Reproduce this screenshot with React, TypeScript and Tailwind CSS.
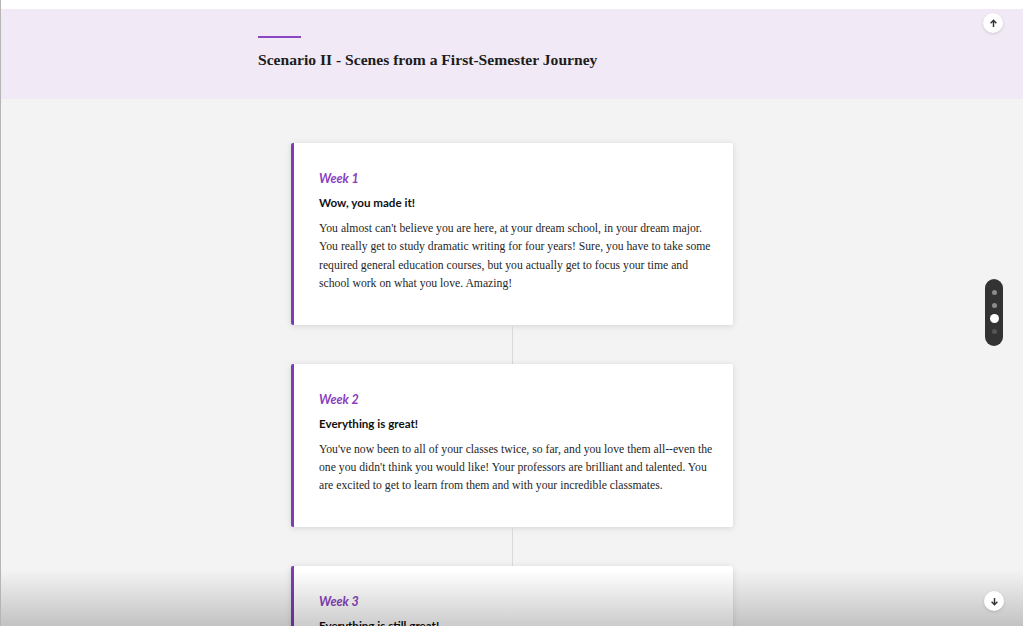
import React from "react";

const serif = { fontFamily: '"Liberation Serif", "DejaVu Serif", serif' };
const lato = { fontFamily: 'Lato, "Open Sans", sans-serif' };

type Card = { week: string; title: string; lines: string[] };

const cards: Card[] = [
  {
    week: "Week 1",
    title: "Wow, you made it!",
    lines: [
      "You almost can't believe you are here, at your dream school, in your dream major.",
      "You really get to study dramatic writing for four years! Sure, you have to take some",
      "required general education courses, but you actually get to focus your time and",
      "school work on what you love. Amazing!",
    ],
  },
  {
    week: "Week 2",
    title: "Everything is great!",
    lines: [
      "You've now been to all of your classes twice, so far, and you love them all--even the",
      "one you didn't think you would like! Your professors are brilliant and talented. You",
      "are excited to get to learn from them and with your incredible classmates.",
    ],
  },
  {
    week: "Week 3",
    title: "Everything is still great!",
    lines: [
      "Classes are getting a little harder, but you are keeping up with all of your work.",
      "You have made a few friends and you are starting to feel at home on campus.",
    ],
  },
];

function CardView({ c }: { c: Card }) {
  return (
    <div className="w-[442px] bg-white border-l-[3px] border-[#7e3bb8] rounded-[2px] shadow-[0_1px_6px_rgba(0,0,0,0.13)] pl-[25px] pr-[20px] pt-[28px] pb-[31px]">
      <div className="text-[12.5px] leading-[16px] italic font-bold text-[#8a3ec0]" style={lato}>
        {c.week}
      </div>
      <div className="mt-[8px] text-[11.6px] leading-[16px] font-bold text-[#111]" style={lato}>
        {c.title}
      </div>
      <div className="mt-[9px] text-[11.7px] leading-[18.4px] text-[#1f1f1f]" style={serif}>
        {c.lines.map((l, i) => (
          <div key={i} className="whitespace-nowrap">
            {l}
          </div>
        ))}
      </div>
    </div>
  );
}

function Connector() {
  return <div className="w-px h-[39px] bg-[#d9d9d9]" />;
}

export default function App() {
  return (
    <div className="relative w-[1023px] h-[626px] overflow-hidden bg-[#f3f3f3] border-l border-[#b5b5b5]">
      <div className="h-[9px] bg-white" />
      <div className="h-[90px] bg-[#f1e9f5] pl-[257px] pt-[27px]">
        <div className="w-[43px] h-[2px] bg-[#8b46c2]" />
        <div className="mt-[12px] text-[15.6px] leading-[20px] font-bold text-[#1c1c1c]" style={serif}>
          Scenario II - Scenes from a First-Semester Journey
        </div>
      </div>
      <div className="flex flex-col items-center pt-[44px]">
        <CardView c={cards[0]} />
        <Connector />
        <CardView c={cards[1]} />
        <Connector />
        <CardView c={cards[2]} />
      </div>

      {/* bottom shade */}
      <div className="absolute left-0 right-0 bottom-0 h-[56px] bg-gradient-to-b from-[rgba(0,0,0,0)] to-[rgba(0,0,0,0.2)] pointer-events-none" />

      {/* up button */}
      <div className="absolute left-[982px] top-[13px] w-[20px] h-[20px] rounded-full bg-white shadow-[0_1px_3px_rgba(0,0,0,0.15)] flex items-center justify-center">
        <svg width="9" height="9" viewBox="0 0 10 10" fill="none" stroke="#333" strokeWidth="1.6">
          <path d="M5 9V1.5M1.8 4.7L5 1.5l3.2 3.2" />
        </svg>
      </div>

      {/* dot nav */}
      <div className="absolute left-[984px] top-[279px] w-[18px] h-[67px] rounded-full bg-[#333] flex flex-col items-center pt-[11px] gap-[8px]">
        <div className="w-[5px] h-[5px] rounded-full bg-[#8c8c8c]" />
        <div className="w-[5px] h-[5px] rounded-full bg-[#8c8c8c]" />
        <div className="w-[9px] h-[9px] rounded-full bg-white -my-[2px]" />
        <div className="w-[5px] h-[5px] rounded-full bg-[#555]" />
      </div>

      {/* down button */}
      <div className="absolute left-[983px] top-[591px] w-[20px] h-[20px] rounded-full bg-white shadow-[0_1px_3px_rgba(0,0,0,0.15)] flex items-center justify-center">
        <svg width="9" height="9" viewBox="0 0 10 10" fill="none" stroke="#333" strokeWidth="1.6">
          <path d="M5 1v7.5M1.8 5.3L5 8.5l3.2-3.2" />
        </svg>
      </div>
    </div>
  );
}
